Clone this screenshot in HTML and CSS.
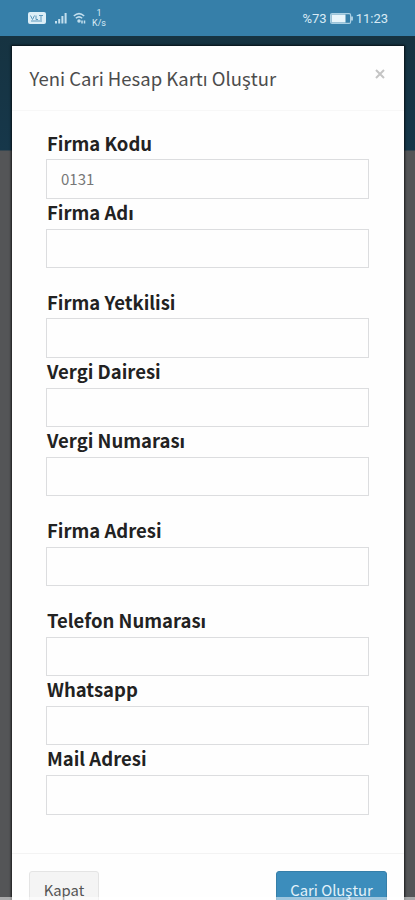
FILE: index.html
```html
<!DOCTYPE html>
<html lang="tr">
<head>
<meta charset="utf-8">
<meta name="viewport" content="width=device-width, initial-scale=1">
<title>Yeni Cari Hesap Kartı Oluştur</title>
<link rel="stylesheet" href="styles.css">
</head>
<body>
<header class="status">
  <svg class="volte" width="18" height="12" viewBox="0 0 18 12"><rect width="18" height="12" rx="2" fill="#dceef7"/><path d="M2.500 3.500l2 4 2-4M8 3.500v4h2M11 3.500h4M13 3.500v4.500M3 9h11" fill="none" stroke="#5b97bb" stroke-width="1"/></svg>
  <svg class="signal" width="12" height="12" viewBox="0 0 12 12" fill="#c3dfee"><path d="M0 9h2v2.500H0zM3.200 7h2v4.500h-2zM6.400 4h2v7.500h-2zM9.600 1H11.600v10.500h-2z"/></svg>
  <svg class="wifi" width="14" height="12" viewBox="0 0 14 12" fill="none" stroke="#c3dfee" stroke-width="1.500"><path d="M.8 4Q6 -.8 11.200 4M2.800 6.300Q6 3.500 9.200 6.300"/><circle cx="6" cy="9" r="1" fill="#c3dfee"/><path d="M9 8.500v3M11.500 8.500v3"/></svg>
  <div class="speed"><span>1</span><span>K/s</span></div>
  <div class="right">
    <span class="pct">%73</span>
    <svg width="23" height="11" viewBox="0 0 23 11"><rect x=".6" y=".6" width="20" height="9.800" rx="1.500" fill="none" stroke="#a9cfe3" stroke-width="1.200"/><rect x="1.500" y="1.500" width="14" height="8" fill="#e8f5fb"/><path d="M22 3.500v4" stroke="#d2e7f2" stroke-width="1.500"/></svg>
    <span class="time">11:23</span>
  </div>
</header>
<main class="page">
  <section class="modal">
    <div class="modal-header"><h1>Yeni Cari Hesap Kartı Oluştur</h1>
      <svg class="close" width="10" height="10" viewBox="0 0 10 10"><path d="M1 1l8 8M9 1L1 9" stroke="#c4c4c4" stroke-width="2"/></svg></div>
    <form class="modal-body">
      <div class="group">
        <label for="kod">Firma Kodu</label><input id="kod" value="0131">
        <label for="ad">Firma Adı</label><input id="ad">
      </div>
      <div class="group">
        <label for="yetkili">Firma Yetkilisi</label><input id="yetkili">
        <label for="daire">Vergi Dairesi</label><input id="daire">
        <label for="vno">Vergi Numarası</label><input id="vno">
      </div>
      <div class="group">
        <label for="adres">Firma Adresi</label><input id="adres">
      </div>
      <div class="group">
        <label for="tel">Telefon Numarası</label><input id="tel">
        <label for="wa">Whatsapp</label><input id="wa">
        <label for="mail">Mail Adresi</label><input id="mail">
      </div>
    </form>
    <div class="modal-footer">
      <button class="btn" type="button">Kapat</button>
      <button class="btn primary" type="button">Cari Oluştur</button>
    </div>
  </section>
</main>
<div class="bottom-edge"></div>
</body>
</html>
```
FILE: styles.css
```css
* { box-sizing: border-box; }
body {
  margin: 0;
  height: 900px;
  overflow: hidden;
  display: flex;
  flex-direction: column;
  font-family: "Noto Sans CJK SC", "Noto Sans", sans-serif;
  background: #545557;
}
.status {
  flex: none;
  height: 36px;
  padding: 0 27px 0 28px;
  display: flex;
  align-items: center;
  background: #367fa9;
  color: #d9ebf5;
  font-family: Roboto, sans-serif;
}
.signal { margin-left: 9px; }
.wifi { margin-left: 6px; }
.speed {
  margin-left: 5px;
  width: 14px;
  display: flex;
  flex-direction: column;
  align-items: center;
  font-size: 9px;
  line-height: 10px;
}
.right {
  margin-left: auto;
  display: flex;
  align-items: center;
  font-size: 13px;
}
.pct { margin-right: 3px; }
.time { margin-left: 3px; }
.page {
  flex: 1;
  min-height: 0;
  padding: 10px 11px 0 12px;
  background: linear-gradient(#163341 0, #16374a 114px, #545557 115px);
}
.modal {
  height: 870px;
  background: #fefefe;
  box-shadow: 0 0 2px 1px rgba(0, 0, 0, .7);
}
.modal-header {
  height: 65px;
  padding: 0 19px 0 17.500px;
  display: flex;
  justify-content: space-between;
  border-bottom: 1px solid #f7f7f7;
}
h1 {
  margin: 0;
  font-size: 18.500px;
  font-weight: 400;
  line-height: 65px;
  color: #4c4c4c;
}
.close { margin-top: 23px; }
.modal-body {
  height: 742px;
  padding: 18.500px 35px 0 34px;
}
.group { margin-bottom: 20.500px; }
label {
  display: block;
  height: 29.800px;
  padding-left: 1px;
  line-height: 26px;
  font-size: 18.500px;
  font-weight: 700;
  color: #222;
}
input {
  display: block;
  width: 100%;
  height: 39.500px;
  padding: 0 14px 2px;
  border: 1px solid #dcdddf;
  border-radius: 0;
  background: #fefefe;
  font: 400 15px "Noto Sans CJK SC", sans-serif;
  color: #777;
}
.modal-footer {
  padding: 17px 17px 0;
  display: flex;
  justify-content: space-between;
  border-top: 1px solid #f3f3f3;
}
.btn {
  width: 70px;
  height: 40px;
  padding: 0 0 3px;
  border: 1px solid #e4e4e4;
  border-radius: 3px;
  background: #f4f4f4;
  font: 400 14.800px "Noto Sans CJK SC", "Noto Sans", sans-serif;
  color: #555;
}
.primary {
  width: 111px;
  background: #3c8dbc;
  border-color: #367fa9;
  color: #e4f2fa;
}
.bottom-edge {
  position: absolute;
  left: 0;
  right: 0;
  top: 897px;
  height: 3px;
  background: rgba(255, 255, 255, .5);
}
```
